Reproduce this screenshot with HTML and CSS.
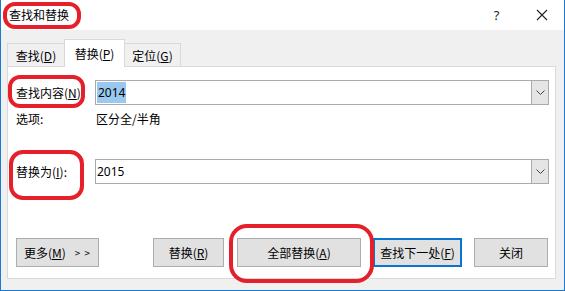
FILE: index.html
```html
<!DOCTYPE html>
<html lang="zh-CN">
<head>
  <meta charset="UTF-8">
  <title>查找和替换</title>
  <link rel="stylesheet" href="styles.css">
</head>
<body>
  <div class="window">
    <div class="titlebar">
      <span class="title">查找和替换</span>
      <span class="ctrl help">?</span>
      <span class="ctrl close">
        <svg width="12" height="12" viewBox="0 0 12 12"><path d="M1 1 L11 11 M11 1 L1 11" stroke="#222" stroke-width="1.1" fill="none"/></svg>
      </span>
    </div>

    <div class="dialog">
      <div class="tabs">
        <div class="tab tab-find">查找(<u>D</u>)</div>
        <div class="tab tab-replace active">替换(<u>P</u>)</div>
        <div class="tab tab-goto">定位(<u>G</u>)</div>
      </div>

      <div class="panel">
        <div class="field">
          <label class="label">查找内容(<u>N</u>)</label>
          <div class="combo">
            <span class="value"><span class="selected">2014</span></span>
            <span class="drop">
              <svg width="9" height="5" viewBox="0 0 9 5"><path d="M0.5 0.5 L4.5 4.5 L8.5 0.5" stroke="#444" fill="none"/></svg>
            </span>
          </div>
        </div>

        <div class="options">
          <span class="opt-label">选项:</span>
          <span>区分全/半角</span>
        </div>

        <div class="field field-replace">
          <label class="label">替换为(<u>I</u>):</label>
          <div class="combo">
            <span class="value">2015</span>
            <span class="drop">
              <svg width="9" height="5" viewBox="0 0 9 5"><path d="M0.5 0.5 L4.5 4.5 L8.5 0.5" stroke="#444" fill="none"/></svg>
            </span>
          </div>
        </div>

        <div class="buttons">
          <button class="btn btn-more">更多(<u>M</u>) <span class="arrows">&gt; &gt;</span></button>
          <button class="btn btn-replace">替换(<u>R</u>)</button>
          <button class="btn btn-all">全部替换(<u>A</u>)</button>
          <button class="btn btn-next">查找下一处(<u>F</u>)</button>
          <button class="btn btn-close">关闭</button>
        </div>
      </div>
    </div>

    <!-- red marks drawn over the dialog -->
    <div class="mark mark-title"></div>
    <div class="mark mark-find"></div>
    <div class="mark mark-replace"></div>
    <div class="mark mark-all"></div>
  </div>
</body>
</html>
```

FILE: styles.css
```css
/* Base */
body {
  margin: 0;
  font-family: "Noto Sans CJK SC", "Noto Sans", sans-serif;
  font-size: 12px;
  color: #000;
  background: #ffffff;
}

u {
  text-decoration: underline;
  text-underline-offset: 1px;
}

.window {
  position: relative;
  width: 565px;
  height: 291px;
  box-sizing: border-box;
  border: 1px solid #1a79d2;
  border-top: none;
  background: #f0f0f0;
  display: flex;
  flex-direction: column;
}

/* Title bar */
.titlebar {
  height: 30px;
  background: #ffffff;
  display: flex;
  align-items: center;
  padding-left: 8px;
}

.title {
  flex: 1;
  font-size: 12px;
  line-height: 30px;
}

.ctrl {
  width: 45px;
  height: 30px;
  display: flex;
  justify-content: center;
  align-items: center;
}

.help {
  font-family: "Noto Sans", sans-serif;
  font-size: 13px;
  color: #222;
}

/* Dialog body */
.dialog {
  padding: 9px 0 0 6px;
}

.tabs {
  display: flex;
  align-items: flex-end;
  height: 27px;
  position: relative;
  z-index: 1;
}

.tab {
  height: 23px;
  box-sizing: border-box;
  border: 1px solid #d9d9d9;
  border-bottom: none;
  display: flex;
  justify-content: center;
  align-items: center;
  background: #f0f0f0;
  margin-right: -1px;
}

.tab-find {
  width: 58px;
}

.tab-replace {
  width: 61px;
}

.tab-goto {
  width: 57px;
}

.tab.active {
  height: 28px;
  margin-bottom: -1px;
  background: #ffffff;
  position: relative;
  z-index: 2;
}

.panel {
  width: 549px;
  height: 213px;
  box-sizing: border-box;
  border: 1px solid #d9d9d9;
  background: #ffffff;
  padding: 13px 0 0 8px;
}

/* Fields */
.field {
  display: flex;
  align-items: center;
  height: 25px;
}

.label {
  width: 78px;
  margin-right: 1px;
  white-space: nowrap;
  overflow: hidden;
}

.combo {
  width: 454px;
  height: 25px;
  box-sizing: border-box;
  border: 1px solid #aaaaaa;
  display: flex;
  align-items: center;
}

.value {
  flex: 1;
  padding-left: 1px;
  font-family: "Noto Sans", "Noto Sans CJK SC", sans-serif;
  font-size: 12px;
}

.selected {
  background: #99c9ef;
  padding: 2px 1px;
}

.drop {
  width: 17px;
  height: 23px;
  box-sizing: border-box;
  border-left: 1px solid #aaaaaa;
  background: #e5e5e5;
  display: flex;
  justify-content: center;
  align-items: center;
}

.options {
  display: flex;
  margin-top: 6px;
  line-height: 16px;
}

.opt-label {
  width: 80px;
}

.field-replace {
  margin-top: 32px;
}

/* Buttons */
.buttons {
  display: flex;
  margin-top: 54px;
}

.btn {
  height: 29px;
  box-sizing: border-box;
  border: 1px solid #adadad;
  background: #e1e1e1;
  font-family: inherit;
  font-size: 12px;
  padding: 0;
  display: flex;
  justify-content: center;
  align-items: center;
}

.btn-more {
  width: 83px;
}

.arrows {
  margin-left: 9px;
  font-size: 10px;
  letter-spacing: 1px;
}

.btn-replace {
  width: 71px;
  margin-left: 54px;
}

.btn-all {
  width: 124px;
  margin-left: 13px;
}

.btn-next {
  width: 89px;
  margin-left: 12px;
  border: 2px solid #0a74d0;
}

.btn-close {
  width: 74px;
  margin-left: 12px;
}

/* Red annotation marks */
.mark {
  position: absolute;
  border: 4px solid #e6202b;
  border-radius: 12px;
  box-sizing: border-box;
}

.mark-title {
  left: 2px;
  top: 2px;
  width: 78px;
  height: 27px;
}

.mark-find {
  left: 7px;
  top: 75px;
  width: 77px;
  height: 33px;
}

.mark-replace {
  left: 8px;
  top: 150px;
  width: 75px;
  height: 50px;
  border-radius: 14px;
}

.mark-all {
  left: 228px;
  top: 224px;
  width: 145px;
  height: 59px;
  border-radius: 18px;
}
```
